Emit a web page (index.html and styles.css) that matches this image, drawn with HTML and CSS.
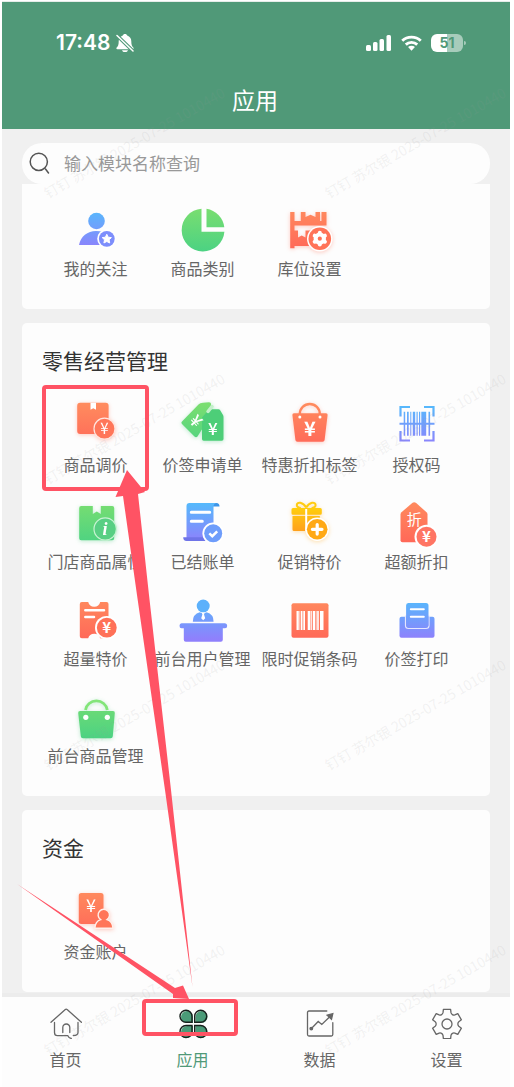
FILE: index.html
```html
<!DOCTYPE html>
<html lang="zh-CN">
<head>
<meta charset="utf-8">
<meta name="viewport" content="width=device-width, initial-scale=1">
<title>应用</title>
<link rel="stylesheet" href="styles.css">
</head>
<body>
<svg class="defs" width="0" height="0" aria-hidden="true">
  <defs>
    <linearGradient id="orange" gradientUnits="userSpaceOnUse" x1="0" y1="0" x2="0" y2="44"><stop offset="0" stop-color="#ff8b5e"/><stop offset="1" stop-color="#ff6658"/></linearGradient>
    <linearGradient id="blue" gradientUnits="userSpaceOnUse" x1="0" y1="3" x2="0" y2="41"><stop offset="0" stop-color="#57b8fc"/><stop offset="1" stop-color="#8f80fc"/></linearGradient>
    <linearGradient id="green" gradientUnits="userSpaceOnUse" x1="0" y1="0" x2="0" y2="44"><stop offset="0" stop-color="#7ade70"/><stop offset="1" stop-color="#4bd283"/></linearGradient>
    <linearGradient id="yellow" gradientUnits="userSpaceOnUse" x1="0" y1="2" x2="0" y2="38"><stop offset="0" stop-color="#ffd80a"/><stop offset="1" stop-color="#ff9020"/></linearGradient>
  </defs>
</svg>
<div class="app">
  <header class="header">
    <div class="status">
      <div class="status-left">
        <span class="clock">17:48</span>
        <svg width="18" height="20" viewBox="0 0 18 20"><path fill="#fff" d="M9 1c1.200 0 2 .7 2.200 1.500 2.700.9 4.100 3 4.100 5.700 0 3.500.6 4.800 2 6.200.6.700.3 1.800-.6 1.800H1.300c-.9 0-1.200-1.100-.6-1.800 1.400-1.400 2-2.700 2-6.200 0-2.700 1.400-4.800 4.100-5.700C7 1.700 7.800 1 9 1zM6 17.200h6c-.4 1.300-1.400 1.900-3 1.900s-2.600-.6-3-1.900z"/><path d="M1 2.500l16 15.500" stroke="#509978" stroke-width="3.600"/><path d="M1 2.500l16 15.500" stroke="#fff" stroke-width="1.500" stroke-linecap="round"/></svg>
      </div>
      <div class="status-right">
        <svg width="26" height="18" viewBox="0 0 26 18" fill="#fff"><rect x="0" y="11" width="5" height="6" rx="1.500"/><rect x="7" y="8" width="4.500" height="9" rx="1.500"/><rect x="13.500" y="5" width="4.500" height="12" rx="1.500"/><rect x="20.500" y="1" width="4.500" height="16" rx="1.500"/></svg>
        <svg width="21" height="18" viewBox="0 0 22 18" fill="none" stroke="#fff" stroke-width="3"><path d="M1.300 6.700a14 14 0 0 1 19.400 0M5 10.700a8.700 8.700 0 0 1 12 0"/><path d="M7.400 13.200a5.200 5.200 0 0 1 7.200 0L11 17z" fill="#fff" stroke="none"/></svg>
        <span class="battery"><span class="battery-text">51</span></span>
      </div>
    </div>
    <h1 class="title">应用</h1>
  </header>

  <main class="main">
    <label class="search">
      <svg width="22" height="22" viewBox="0 0 22 22" fill="none" stroke="#555" stroke-width="1.500" stroke-linecap="round"><circle cx="10.800" cy="9.800" r="8.600"/><path d="M17.500 17l3 4"/></svg>
      <input type="text" placeholder="输入模块名称查询" aria-label="输入模块名称查询">
    </label>

    <div class="cards">
      <section class="card card-first">
        <div class="grid">
          <button class="item"><svg class="icon" viewBox="0 0 44 44"><g fill="url(#blue)"><circle cx="22.500" cy="13" r="8.300"/><path d="M5 37c1.500-8.500 8.500-14 17-14 5.500 0 9 1.500 11 4v10z"/></g><circle cx="32.800" cy="30.800" r="9.600" fill="#fff"/><circle cx="32.800" cy="30.800" r="7.900" fill="#7d8efc"/><path fill="#fff" stroke="#fff" stroke-linejoin="round" d="M32.800 26.300l1.400 2.900 3.200.4-2.300 2.200.6 3.200-2.900-1.500-2.900 1.500.6-3.200-2.300-2.200 3.200-.4z"/></svg><span>我的关注</span></button>
          <button class="item"><svg class="icon" viewBox="0 0 44 44" fill="url(#green)"><path d="M20.500.700A21.400 21.400 0 1 0 43.400 23.700H20.500z"/><path d="M25.500.800A21.400 21.400 0 0 1 43.300 19.300H25.500z"/></svg><span>商品类别</span></button>
          <button class="item"><svg class="icon glow" viewBox="0 0 44 44"><path fill="url(#orange)" d="M2.200 4h4.300v9h6.300V4h4.700v5l5-2.300 5 2.300V4H32v9h1.500V4h5v13.500h-32v5.100H10v7l3.700-2 3.800 2v-7H30V38H6.500v2.300H2.200z"/><circle cx="31.800" cy="30.700" r="12.800" fill="#fff"/><circle cx="31.800" cy="30.700" r="11.300" fill="#ff7358"/><circle cx="31.800" cy="30.700" r="6.200" fill="#fff"/><path d="M31.800 24.800v11.800M26.700 27.700l10.200 6M36.900 27.700l-10.200 6" stroke="#fff" stroke-width="4" stroke-linecap="round"/><circle cx="31.800" cy="30.700" r="2.100" fill="#ff7358"/></svg><span>库位设置</span></button>
        </div>
      </section>

      <section class="card">
        <h2 class="card-title">零售经营管理</h2>
        <div class="grid">
          <button class="item"><svg class="icon glow" viewBox="0 0 44 44"><rect x="3.200" y="-1.300" width="31.400" height="31.400" rx="3" fill="url(#orange)"/><path fill="#fff" d="M16.500-1.300h5.500v7l-2.700-1.500L16.500 5.700z"/><circle cx="30.500" cy="24.700" r="10.500" fill="#ff7659" stroke="#ffe6df" stroke-width="1.200"/><text class="glyph" x="30.500" y="30" font-size="15">¥</text></svg><span>商品调价</span></button>
          <button class="item"><svg class="icon glow-green" viewBox="0 0 44 44"><path fill="url(#green)" d="M1 17.500L17.500.500Q19-1 22-1.200l6-.5q2.500 0 2 2.500L28 14 16.500 32.500q-1.500 1.500-3 0L1 20q-1.200-1.200 0-2.500z"/><path fill="#4dce78" d="M21 13.500l6.500-7.500Q28 5.300 29 5.300h8.500q1 0 1.500.7l3 5q.5 1 .5 2v22q0 1.700-1.700 1.700H22.700Q21 36.700 21 35z"/><path d="M27 7.500l4-5" stroke="#c4f0cb" stroke-width="3.500" stroke-linecap="round"/><text class="glyph medium" x="31.800" y="31" font-size="17">¥</text><text class="glyph medium" x="15" y="23" font-size="17" transform="rotate(48 15 17)">¥</text></svg><span>价签申请单</span></button>
          <button class="item"><svg class="icon glow" viewBox="0 0 44 44"><path d="M11.800 11v-1a10 10 0 0 1 20 0v1" fill="none" stroke="url(#orange)" stroke-width="2.300"/><path fill="url(#orange)" d="M6 9.300h32q1.800 0 1.600 1.800l-3 24.900q-.2 1.800-2 1.800H9.400q-1.800 0-2-1.800l-3-24.900Q4.200 9.300 6 9.300z"/><circle cx="11.800" cy="13" r="1.500" fill="#fff"/><circle cx="32" cy="13" r="1.500" fill="#fff"/><text class="glyph bold" x="21.900" y="31.500" font-size="20">¥</text></svg><span>特惠折扣标签</span></button>
          <button class="item"><svg class="icon" viewBox="0 0 44 44"><path fill="none" stroke="url(#blue)" stroke-width="2.200" d="M5.500 12.500V3h9.500M29 3h9.500v9.500M38.500 27v9.500H29M15 36.500H5.500V27"/><path fill="url(#blue)" d="M8.700 7.700h1.500v24H8.700zM12 7.700h1.700v24H12zM15.300 7.700h1v24h-1zM17.800 7.700h2.400v24h-2.400zM21.500 7.700h1.200v24h-1.200zM24 7.700h1.200v24H24zM26.300 7.700h4.900v24h-4.900zM33.500 7.700h1.600v24h-1.600zM4.500 18.700h35v2h-35z"/></svg><span>授权码</span></button>

          <button class="item"><svg class="icon glow-green" viewBox="0 0 44 44"><path fill="url(#green)" d="M7.200 5h11.600v8l4-2.500 4 2.500V5h11.400q2 0 2 2v30.300q0 2-2 2h-31q-2 0-2-2V7q0-2 2-2z"/><circle cx="31.200" cy="28" r="11.200" fill="#58cf83" stroke="#c8f3d2" stroke-width="1.200"/><text class="info" x="31" y="34" font-size="18">i</text></svg><span>门店商品属性</span></button>
          <button class="item"><svg class="icon" viewBox="0 0 44 44"><path fill="#3d95e8" d="M32 2h3.500q3 0 3 3.500H32z"/><path fill="url(#blue)" d="M8.500 2h27q-3 .5-3 3.500v34H5.500V5q0-3 3-3z"/><path fill="#6f74e8" d="M2.200 36.300h20.500l2 3.700H5.500q-3.300 0-3.300-3.700z"/><path stroke="#fff" stroke-width="3" stroke-linecap="round" d="M10.300 11.300h18.400M10.300 20.300h11"/><circle cx="32.200" cy="32.300" r="10.800" fill="#fff"/><circle cx="32.200" cy="32.300" r="9" fill="#6e9dfb"/><path d="M28.300 32.300l3 2.900 4.900-4.800" fill="none" stroke="#fff" stroke-width="2.500"/></svg><span>已结账单</span></button>
          <button class="item"><svg class="icon glow-yellow" viewBox="0 0 44 44"><path fill="none" stroke="#ffcc10" stroke-width="2" d="M18.200 6.500C15 1 9 .3 8.800 4q0 2.600 4 3M18.200 6.500C21.400 1 27.400.300 27.600 4q0 2.600-4 3"/><path fill="url(#yellow)" d="M5 7h27.300q1.500 0 1.500 1.500v3.700q0 1.500-1.500 1.500H5q-1.500 0-1.500-1.500V8.500Q3.500 7 5 7zM4.500 15h27.300v15H6q-1.500 0-1.500-1.500z"/><path stroke="#fff" stroke-width="2" d="M18.200 8v22"/><circle cx="29.200" cy="28.300" r="11.700" fill="#fff"/><circle cx="29.200" cy="28.300" r="10.300" fill="#ffa915"/><path stroke="#fff" stroke-width="3.200" stroke-linecap="round" d="M29.200 23.500v9.600M24.400 28.300H34"/></svg><span>促销特价</span></button>
          <button class="item"><svg class="icon" viewBox="0 0 44 44"><path fill="url(#orange)" d="M17.200 1.900q2-1.500 4 0l10.300 9.400q1 1 1 2.300v27.700h-25q-2 0-2-2V13.600q0-1.300 1-2.300z"/><text class="glyph" x="19.200" y="24" font-size="15">折</text><circle cx="31.500" cy="35.700" r="12" fill="#fff"/><circle cx="31.500" cy="35.700" r="10" fill="#ff7564"/><text class="glyph bold" x="31.500" y="41" font-size="15">¥</text></svg><span>超额折扣</span></button>

          <button class="item"><svg class="icon" viewBox="0 0 44 44"><path fill="url(#orange)" d="M7.800 4h6.400q1.200 4.800 6 4.800t6-4.800h6.300q2 0 2 2v30l-5 4.300h-3.300q-1.200-4.500-6-4.500t-6 4.500H7.800q-2 0-2-2V6q0-2 2-2z"/><path d="M11.300 12.300H30M11.300 19H20" stroke="#fff" stroke-width="2.500" stroke-linecap="round"/><circle cx="32.800" cy="29.700" r="11.800" fill="#fff"/><circle cx="32.800" cy="29.700" r="9.900" fill="#ff7158"/><text class="glyph bold" x="32.800" y="35" font-size="15">¥</text></svg><span>超量特价</span></button>
          <button class="item"><svg class="icon" viewBox="0 0 44 44"><path fill="url(#blue)" d="M11.800 23.700q0-7.500 7-9.400h6.800q7 1.900 7 9.400zM.500 25.300h43.500q2.200 0 2.200 2.500t-2.200 2.500h-2.200v11.400q0 2-2 2h-35q-2 0-2-2V30.300H.500q-2 0-2-2.500t2-2.500z"/><circle cx="22.200" cy="8" r="7.200" fill="#fff"/><circle cx="22.200" cy="8" r="6.500" fill="#5cb1fb"/><path fill="#fff" d="M20.500 14.500h3.400l-.9 2 1.200 3.800-2 2-2-2 1.200-3.800z"/></svg><span>前台用户管理</span></button>
          <button class="item"><svg class="icon" viewBox="0 0 44 44"><rect x="3.500" y="5.300" width="37" height="34.400" rx="2" fill="url(#orange)"/><path fill="#fff" d="M8.500 13h2.300v19H8.500zM11.500 13h.8v19h-.8zM13 13h1.500v19H13zM15.300 13H17v19h-1.700zM19.700 13h2.800v19h-2.800zM23.200 13h1v19h-1zM25 13h2v19h-2zM27.700 13h.8v19h-.8zM29.200 13h1.600v19h-1.600zM32 13h3.500v19H32z"/></svg><span>限时促销条码</span></button>
          <button class="item"><svg class="icon" viewBox="0 0 44 44"><path fill="url(#blue)" d="M6.500 18.700h31q2 0 2 2v17q0 2-2 2h-31q-2 0-2-2v-17q0-2 2-2z"/><path d="M10.500 18v9.500q0 3 3 3H31q3 0 3-3V18z" fill="#7c92fc" stroke="#e4e6ff" stroke-width="1.200"/><path fill="url(#blue)" d="M13.300 5H31q2.500 0 2.500 2.500v19.300q0 2.800-2.500 2.800H13.600q-2.500 0-2.500-2.800V7.500Q11 5 13.300 5z"/><path stroke="#fff" stroke-width="2" stroke-linecap="round" d="M15.800 11.300h13M15.800 18.700h13"/></svg><span>价签打印</span></button>

          <button class="item"><svg class="icon glow-green" viewBox="0 0 44 44"><path d="M11.500 15a11 10.500 0 0 1 21.800 0" fill="none" stroke="#83e579" stroke-width="2.800"/><path fill="url(#green)" d="M6 16h33q2 0 1.800 2l-2 23.300q-.2 2-2.200 2H9q-2 0-2.200-2L4.200 18Q4 16 6 16z"/><circle cx="11.800" cy="22.300" r="2.600" fill="#fff"/><circle cx="33.300" cy="22.300" r="2.600" fill="#fff"/></svg><span>前台商品管理</span></button>
        </div>
      </section>

      <section class="card">
        <h2 class="card-title">资金</h2>
        <div class="grid">
          <button class="item"><svg class="icon glow" viewBox="0 0 44 44"><rect x="4.800" y="2" width="24.700" height="31" rx="2.500" fill="url(#orange)"/><text class="glyph" x="16.900" y="21" font-size="18">¥</text><path fill="#ff7659" stroke="#fff0eb" stroke-width="1.400" d="M26.600 28.700a5.700 5.700 0 1 1 6.400 0q5.500 1.800 6 8.500H20.800q.5-6.700 5.800-8.500z"/></svg><span>资金账户</span></button>
        </div>
      </section>
    </div>
  </main>

  <nav class="tabs">
    <a class="tab" href="#home"><svg class="tab-icon" viewBox="0 0 32 32"><path d="M1 15.300L15 2.700q1.200-1 2.400 0l14 12.600M4.500 15.500v10q0 3.200 3 3.200h10.300q1.200 2.300 3.500 2.800M28 15.500v10q0 3-4.700 3M12.800 25.500v-5a3.500 3.500 0 0 1 7 0v5"/></svg><span>首页</span></a>
    <a class="tab active" href="#apps"><svg class="tab-icon" viewBox="0 0 32 32"><g fill="#4a9b78" stroke="none"><path d="M16 16H10a6 6 0 1 1 6-6zM18.500 16v-6a6 6 0 1 1 6 6zM16 19H10a6 6 0 1 0 6 6zM18.500 19v6a6 6 0 1 0 6-6z"/></g><g stroke="#17211d" stroke-width="1.400"><path d="M15 15.300H9a6 6 0 1 1 6-6zM17.700 15.300v-6a6 6 0 1 1 6 6zM15 18.500H9a6 6 0 1 0 6 6zM17.700 18.500v6a6 6 0 1 0 6-6z"/></g></svg><span>应用</span></a>
    <a class="tab" href="#data"><svg class="tab-icon" viewBox="0 0 32 32"><path d="M22.800 4H5Q3.500 4 3.500 5.500v22Q3.500 29 5 29h22.300q1.500 0 1.500-1.500V15.700M7.200 21.700l7-7.200 3.600 3L26 9.500"/><circle cx="7.300" cy="21.600" r="1.300" fill="#666"/><path fill="#666" d="M23.200 8.200l5.600-1.500-1.300 5.500z"/></svg><span>数据</span></a>
    <a class="tab" href="#settings"><svg class="tab-icon" viewBox="0 0 32 32"><g transform="translate(16 17)"><path stroke-linejoin="round" d="M-4-11.300L-3.600-14.600H3.600L4-11.300A3 3 0 0 0 7.800-9.100L10.800-10.400 14.400-4.200 11.800-2.200A3 3 0 0 0 11.800 2.200L14.400 4.200 10.800 10.400 7.800 9.100A3 3 0 0 0 4 11.300L3.600 14.600H-3.600L-4 11.300A3 3 0 0 0-7.800 9.100L-10.800 10.400-14.400 4.200-11.800 2.200A3 3 0 0 0-11.800-2.200L-14.400-4.200-10.800-10.400-7.800-9.100A3 3 0 0 0-4-11.300z"/><circle r="5"/></g></svg><span>设置</span></a>
  </nav>

  <svg class="overlay" width="514" height="1087" viewBox="0 0 514 1087" aria-hidden="true">
    <g class="watermark">
      <text transform="translate(48 199) rotate(-30)">钉钉 苏尔银 2025-07-25 1010440</text>
      <text transform="translate(329 199) rotate(-30)">钉钉 苏尔银 2025-07-25 1010440</text>
      <text transform="translate(48 485) rotate(-30)">钉钉 苏尔银 2025-07-25 1010440</text>
      <text transform="translate(329 485) rotate(-30)">钉钉 苏尔银 2025-07-25 1010440</text>
      <text transform="translate(48 771) rotate(-30)">钉钉 苏尔银 2025-07-25 1010440</text>
      <text transform="translate(329 771) rotate(-30)">钉钉 苏尔银 2025-07-25 1010440</text>
      <text transform="translate(48 1056) rotate(-30)">钉钉 苏尔银 2025-07-25 1010440</text>
      <text transform="translate(329 1056) rotate(-30)">钉钉 苏尔银 2025-07-25 1010440</text>
    </g>
    <g fill="none" stroke="#ff5364" stroke-width="4">
      <rect x="44" y="387" width="103" height="102" rx="2"/>
      <rect x="144" y="1001" width="92" height="33" rx="2"/>
    </g>
    <g fill="#ff5364">
      <path d="M127 470L145 492 138 494 149 595 171 790 192.500 987 165 790 137 595 123 496 115.500 497z"/>
      <path d="M17 884L175 988 183 985.500 189 999 173 998 173 994z"/>
    </g>
  </svg>
</div>
</body>
</html>
```
FILE: styles.css
```css
* {
  box-sizing: border-box;
}

body {
  margin: 0;
  background: #fff;
  font-family: "Noto Sans CJK SC", "Noto Sans", sans-serif;
  color: #666;
}

button,
input {
  font: inherit;
  color: inherit;
  border: 0;
  background: none;
  padding: 0;
}

.defs {
  position: absolute;
}

.app {
  position: relative;
  display: flex;
  flex-direction: column;
  min-height: 100vh;
  padding: 1px 4px 0 2px;
  overflow: hidden;
}

.header {
  border-top: 1px solid #e6ece9;
  background: #509978;
  color: #fff;
  padding: 27px 47px 14px 54px;
}

.status,
.status-left,
.status-right {
  display: flex;
  align-items: center;
}

.status {
  justify-content: space-between;
  height: 28px;
}

.status-left {
  gap: 6px;
}

.status-right {
  gap: 9px;
}

.clock {
  font: 600 21px/28px Inter, sans-serif;
}

.battery {
  position: relative;
  width: 32px;
  height: 18px;
  border-radius: 6px;
  background: linear-gradient(90deg, #fff 51%, #a7ccbb 51%);
  text-align: center;
}

.battery::after {
  content: "";
  position: absolute;
  left: 33px;
  top: 7px;
  width: 2px;
  height: 4px;
  border-radius: 0 2px 2px 0;
  background: #a7ccbb;
}

.battery-text {
  display: block;
  font: 700 14px/18px Inter, sans-serif;
  color: #509978;
}

.title {
  margin: 26px 0 0;
  padding-right: 9px;
  font-size: 23px;
  line-height: 32px;
  font-weight: 400;
  text-align: center;
}

.main {
  flex: 1;
  background: #f0f0f0;
  padding: 14px 20px 0;
}

.search {
  display: flex;
  align-items: center;
  gap: 14px;
  height: 41px;
  padding: 0 20px 1px 6px;
  border-radius: 20px;
  background: #fdfdfd;
}

.search input {
  flex: 1;
  min-width: 0;
  font-size: 17px;
  line-height: 24px;
  outline: 0;
}

.search input::placeholder {
  color: #999;
  opacity: 1;
}

.cards {
  display: flex;
  flex-direction: column;
  gap: 14px;
}

.card {
  padding: 20px 20px 30px;
  border-radius: 5px;
  background: #fdfdfd;
}

.card-first {
  padding-top: 24px;
  border-radius: 0 0 5px 5px;
}

.card-title {
  margin: 0 0 27px;
  font-size: 21px;
  line-height: 34px;
  font-weight: 400;
  color: #333;
}

.grid {
  display: grid;
  grid-template-columns: repeat(4, 1fr);
  row-gap: 26px;
}

.item {
  display: flex;
  flex-direction: column;
  align-items: center;
  gap: 5px;
  min-width: 0;
  font-size: 16px;
  line-height: 22px;
  white-space: nowrap;
}

.icon {
  width: 44px;
  height: 44px;
  overflow: visible;
}

.glow {
  filter: drop-shadow(0 1px 2px rgba(255, 110, 80, 0.35));
}

.glow-green {
  filter: drop-shadow(0 1px 2px rgba(70, 200, 120, 0.35));
}

.glow-yellow {
  filter: drop-shadow(0 1px 2px rgba(255, 170, 30, 0.35));
}

.glyph {
  fill: #fff;
  text-anchor: middle;
}

.medium {
  font-weight: 500;
}

.bold {
  font-weight: 700;
}

.info {
  fill: #fff;
  text-anchor: middle;
  font-family: "Liberation Serif", serif;
  font-style: italic;
  font-weight: 700;
}

.tabs {
  display: grid;
  grid-template-columns: repeat(4, 1fr);
  border-top: 4px solid #ececec;
  background: #fdfdfd;
  padding: 10px 0 17px;
}

.tab {
  display: flex;
  flex-direction: column;
  align-items: center;
  gap: 9px;
  font-size: 16px;
  line-height: 22px;
  color: #666;
  text-decoration: none;
}

.active {
  color: #509978;
}

.tab-icon {
  width: 32px;
  height: 32px;
  fill: none;
  stroke: #666;
  stroke-width: 1.3;
  stroke-linecap: round;
}

.overlay {
  position: absolute;
  left: 0;
  top: 0;
  pointer-events: none;
}

.watermark {
  fill: #999;
  fill-opacity: 0.12;
  font-size: 14px;
}
```
